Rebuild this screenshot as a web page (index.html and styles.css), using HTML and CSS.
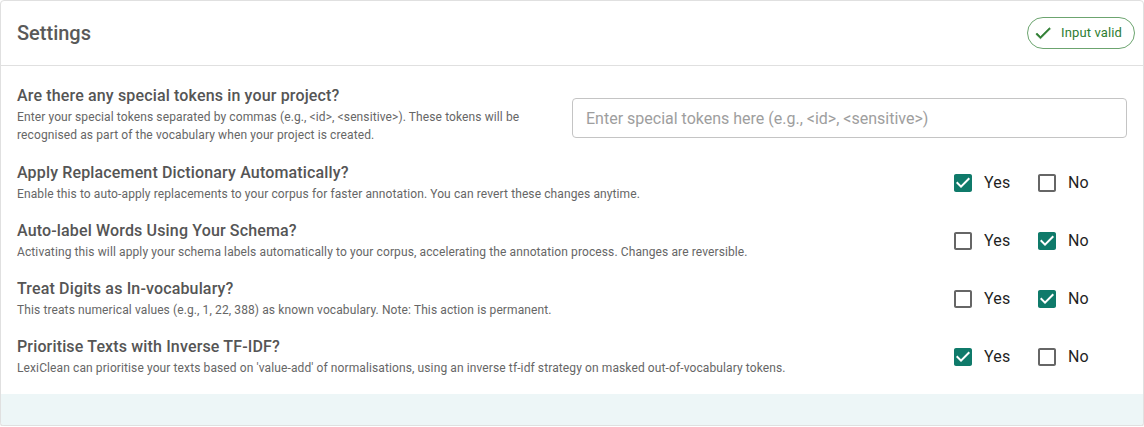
FILE: index.html
```html
<!DOCTYPE html>
<html lang="en">
<head>
<meta charset="utf-8">
<title>Settings</title>
<link rel="stylesheet" href="styles.css">
</head>
<body>
<div class="card">
  <div class="card-header">
    <h2 class="card-title">Settings</h2>
    <span class="chip">
      <svg class="chip-icon" viewBox="0 0 24 24"><path d="M9 16.17 4.83 12l-1.42 1.41L9 19 21 7l-1.41-1.41z"/></svg>
      <span class="chip-label">Input valid</span>
    </span>
  </div>
  <div class="card-content">
    <div class="row row-input">
      <div class="text">
        <div class="q-title">Are there any special tokens in your project?</div>
        <div class="q-desc">Enter your special tokens separated by commas (e.g., &lt;id&gt;, &lt;sensitive&gt;). These tokens will be recognised as part of the vocabulary when your project is created.</div>
      </div>
      <div class="input-wrap">
        <input class="text-input" type="text" placeholder="Enter special tokens here (e.g., <id>, <sensitive>)">
      </div>
    </div>

    <div class="row">
      <div class="text">
        <div class="q-title">Apply Replacement Dictionary Automatically?</div>
        <div class="q-desc">Enable this to auto-apply replacements to your corpus for faster annotation. You can revert these changes anytime.</div>
      </div>
      <div class="options">
        <label class="option"><svg class="cb checked" viewBox="0 0 24 24"><path d="M19 3H5c-1.11 0-2 .9-2 2v14c0 1.1.89 2 2 2h14c1.11 0 2-.9 2-2V5c0-1.1-.89-2-2-2zm-9 14l-5-5 1.41-1.41L10 14.17l7.59-7.59L19 8l-9 9z"/></svg><span class="opt-label">Yes</span></label>
        <label class="option"><svg class="cb" viewBox="0 0 24 24"><path d="M19 5v14H5V5h14m0-2H5c-1.1 0-2 .9-2 2v14c0 1.1.9 2 2 2h14c1.1 0 2-.9 2-2V5c0-1.1-.9-2-2-2z"/></svg><span class="opt-label">No</span></label>
      </div>
    </div>

    <div class="row">
      <div class="text">
        <div class="q-title">Auto-label Words Using Your Schema?</div>
        <div class="q-desc">Activating this will apply your schema labels automatically to your corpus, accelerating the annotation process. Changes are reversible.</div>
      </div>
      <div class="options">
        <label class="option"><svg class="cb" viewBox="0 0 24 24"><path d="M19 5v14H5V5h14m0-2H5c-1.1 0-2 .9-2 2v14c0 1.1.9 2 2 2h14c1.1 0 2-.9 2-2V5c0-1.1-.9-2-2-2z"/></svg><span class="opt-label">Yes</span></label>
        <label class="option"><svg class="cb checked" viewBox="0 0 24 24"><path d="M19 3H5c-1.11 0-2 .9-2 2v14c0 1.1.89 2 2 2h14c1.11 0 2-.9 2-2V5c0-1.1-.89-2-2-2zm-9 14l-5-5 1.41-1.41L10 14.17l7.59-7.59L19 8l-9 9z"/></svg><span class="opt-label">No</span></label>
      </div>
    </div>

    <div class="row">
      <div class="text">
        <div class="q-title">Treat Digits as In-vocabulary?</div>
        <div class="q-desc">This treats numerical values (e.g., 1, 22, 388) as known vocabulary. Note: This action is permanent.</div>
      </div>
      <div class="options">
        <label class="option"><svg class="cb" viewBox="0 0 24 24"><path d="M19 5v14H5V5h14m0-2H5c-1.1 0-2 .9-2 2v14c0 1.1.9 2 2 2h14c1.1 0 2-.9 2-2V5c0-1.1-.9-2-2-2z"/></svg><span class="opt-label">Yes</span></label>
        <label class="option"><svg class="cb checked" viewBox="0 0 24 24"><path d="M19 3H5c-1.11 0-2 .9-2 2v14c0 1.1.89 2 2 2h14c1.11 0 2-.9 2-2V5c0-1.1-.89-2-2-2zm-9 14l-5-5 1.41-1.41L10 14.17l7.59-7.59L19 8l-9 9z"/></svg><span class="opt-label">No</span></label>
      </div>
    </div>

    <div class="row">
      <div class="text">
        <div class="q-title">Prioritise Texts with Inverse TF-IDF?</div>
        <div class="q-desc">LexiClean can prioritise your texts based on 'value-add' of normalisations, using an inverse tf-idf strategy on masked out-of-vocabulary tokens.</div>
      </div>
      <div class="options">
        <label class="option"><svg class="cb checked" viewBox="0 0 24 24"><path d="M19 3H5c-1.11 0-2 .9-2 2v14c0 1.1.89 2 2 2h14c1.11 0 2-.9 2-2V5c0-1.1-.89-2-2-2zm-9 14l-5-5 1.41-1.41L10 14.17l7.59-7.59L19 8l-9 9z"/></svg><span class="opt-label">Yes</span></label>
        <label class="option"><svg class="cb" viewBox="0 0 24 24"><path d="M19 5v14H5V5h14m0-2H5c-1.1 0-2 .9-2 2v14c0 1.1.9 2 2 2h14c1.1 0 2-.9 2-2V5c0-1.1-.9-2-2-2z"/></svg><span class="opt-label">No</span></label>
      </div>
    </div>
  </div>
  <div class="card-footer"></div>
</div>
</body>
</html>
```

FILE: styles.css
```css
* { box-sizing: border-box; }

html, body {
  margin: 0;
  padding: 0;
  background: #ffffff;
  font-family: Roboto, "Liberation Sans", Arial, sans-serif;
}

.card {
  width: 1144px;
  height: 426px;
  background: #ffffff;
  border: 1px solid #e0e0e0;
  border-radius: 4px;
  box-shadow: 0 1px 1px rgba(0, 0, 0, 0.12);
  display: flex;
  flex-direction: column;
  overflow: hidden;
}

.card-header {
  height: 65px;
  flex: 0 0 auto;
  display: flex;
  align-items: center;
  justify-content: space-between;
  padding: 0 8px 0 16px;
  border-bottom: 1px solid #e0e0e0;
}

.card-title {
  margin: 0;
  font-size: 20px;
  font-weight: 500;
  line-height: 32px;
  color: #595959;
}

.chip {
  display: inline-flex;
  align-items: center;
  height: 32px;
  border: 1px solid rgba(46, 125, 50, 0.7);
  border-radius: 16px;
  color: #2e7d32;
  padding: 0 12px 0 5px;
}

.chip-icon {
  width: 20px;
  height: 20px;
  fill: #2e7d32;
  stroke: #2e7d32;
  stroke-width: 0.7;
  margin-right: 8px;
}

.chip-label {
  font-size: 13px;
  line-height: 18px;
  letter-spacing: 0.01em;
}

.card-content {
  flex: 1 1 auto;
  display: flex;
  flex-direction: column;
  gap: 16px;
  padding: 18px 16px 17px;
}

.row {
  display: flex;
  align-items: center;
  justify-content: space-between;
}

.row-input {
  display: grid;
  grid-template-columns: 1fr 1fr;
  align-items: start;
  padding-bottom: 1px;
}

.q-title {
  font-size: 16px;
  font-weight: 500;
  line-height: 24px;
  letter-spacing: 0.00938em;
  color: #555555;
}

.q-desc {
  font-size: 12px;
  line-height: 18px;
  letter-spacing: 0.009em;
  color: #666666;
}

.input-wrap {
  padding-top: 14px;
}

.text-input {
  display: block;
  width: 100%;
  height: 40px;
  border: 1px solid #c4c4c4;
  border-radius: 4px;
  padding: 0 13px;
  font-family: Roboto, "Liberation Sans", Arial, sans-serif;
  font-size: 16px;
  color: #222;
  background: #fff;
  outline: none;
}

.text-input::placeholder {
  color: #9e9e9e;
  opacity: 1;
}

.options {
  display: flex;
  margin-right: 5px;
  margin-top: 2px;
}

.option {
  width: 84px;
  display: flex;
  align-items: center;
}

.cb {
  width: 24px;
  height: 24px;
  margin: 0 -3px;
  fill: #666666;
  flex: 0 0 auto;
}

.cb.checked {
  fill: #0f7a6a;
}

.opt-label {
  margin-left: 12px;
  font-size: 16px;
  line-height: 24px;
  letter-spacing: 0.00938em;
  color: #1f1f1f;
}

.card-footer {
  flex: 0 0 31px;
  background: #edf6f7;
}
```
